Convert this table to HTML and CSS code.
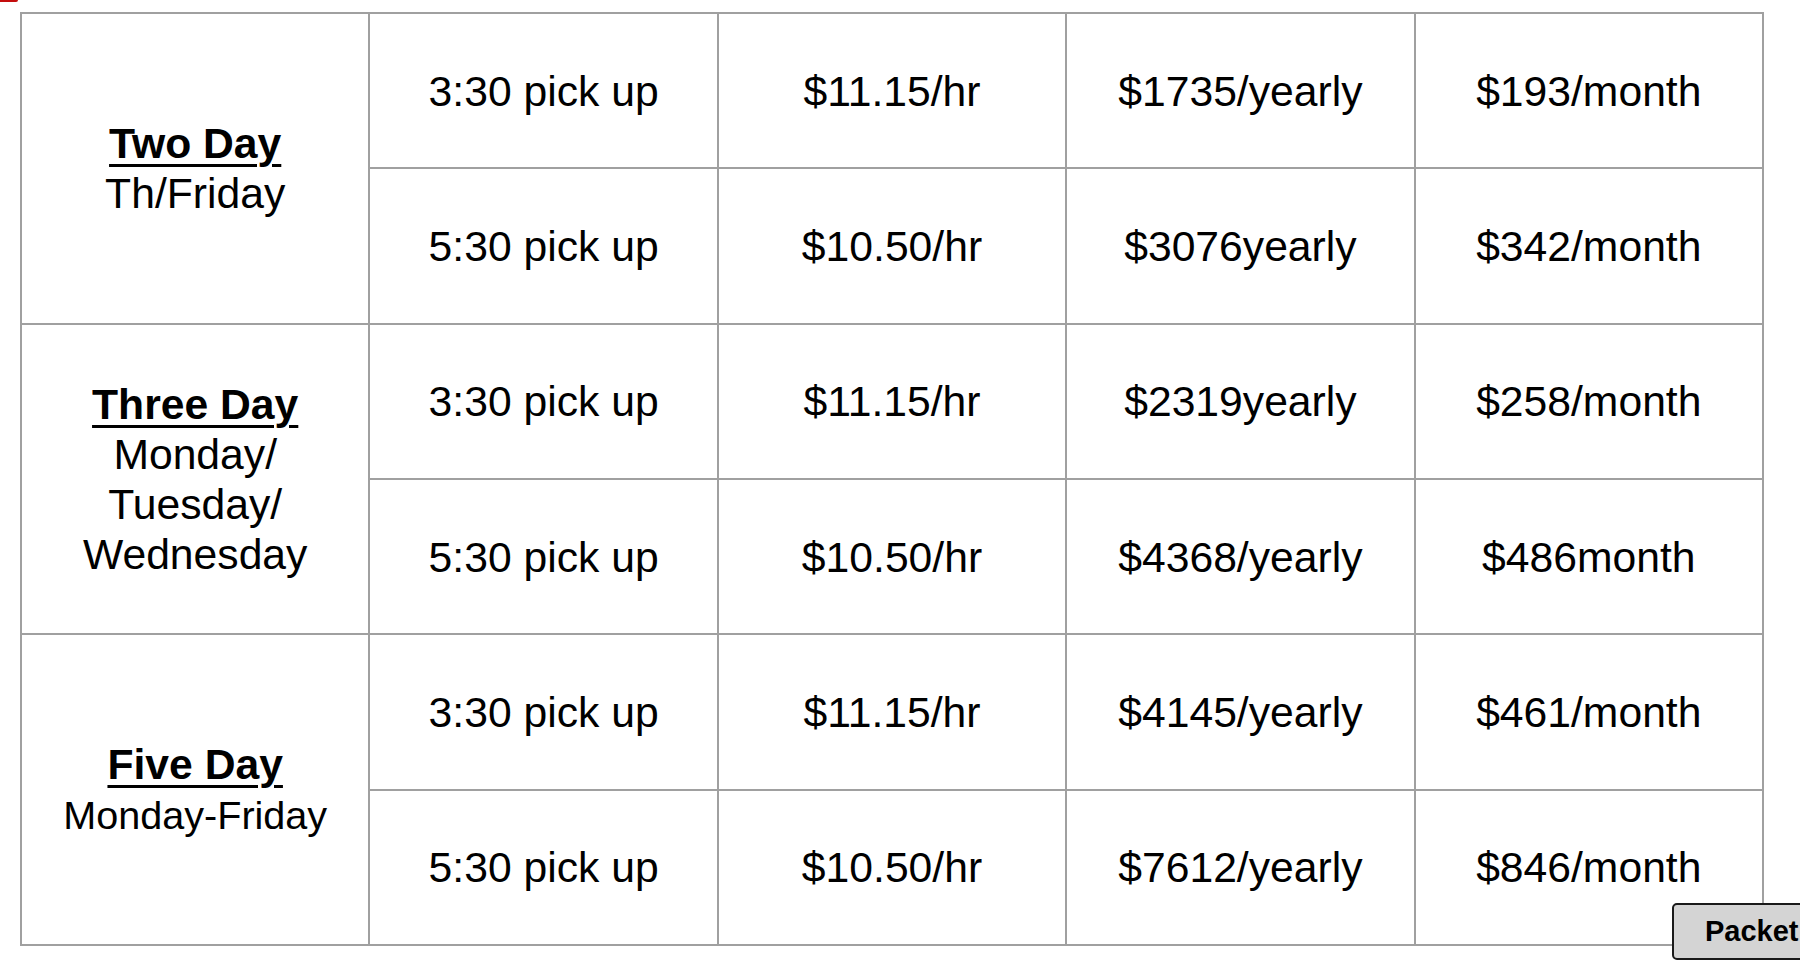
FILE: index.html
```html
<!DOCTYPE html>
<html lang="en">
<head>
<meta charset="utf-8">
<title>Rates</title>
<link rel="stylesheet" href="styles.css">
</head>
<body>
<div class="corner-mark"></div>
<div class="sheet">
  <div class="cell plan span2"><div><span class="plan-name">Two Day</span><br>Th/Friday</div></div>
  <div class="cell">3:30 pick up</div>
  <div class="cell">$11.15/hr</div>
  <div class="cell">$1735/yearly</div>
  <div class="cell">$193/month</div>
  <div class="cell">5:30 pick up</div>
  <div class="cell">$10.50/hr</div>
  <div class="cell">$3076yearly</div>
  <div class="cell">$342/month</div>

  <div class="cell plan span2"><div><span class="plan-name">Three Day</span><br>Monday/<br>Tuesday/<br>Wednesday</div></div>
  <div class="cell">3:30 pick up</div>
  <div class="cell">$11.15/hr</div>
  <div class="cell">$2319yearly</div>
  <div class="cell">$258/month</div>
  <div class="cell">5:30 pick up</div>
  <div class="cell">$10.50/hr</div>
  <div class="cell">$4368/yearly</div>
  <div class="cell">$486month</div>

  <div class="cell plan span2"><div><span class="plan-name">Five Day</span><br><span class="days-small">Monday-Friday</span></div></div>
  <div class="cell">3:30 pick up</div>
  <div class="cell">$11.15/hr</div>
  <div class="cell">$4145/yearly</div>
  <div class="cell">$461/month</div>
  <div class="cell">5:30 pick up</div>
  <div class="cell">$10.50/hr</div>
  <div class="cell">$7612/yearly</div>
  <div class="cell">$846/month</div>
</div>
<button class="packet-btn" type="button">Packet</button>
</body>
</html>
```

FILE: styles.css
```css
html, body {
  margin: 0;
  padding: 0;
  background: #ffffff;
  overflow: hidden;
  width: 1800px;
  height: 966px;
}

body {
  position: relative;
  font-family: "Liberation Sans", Arial, sans-serif;
  color: #000000;
}

.corner-mark {
  position: absolute;
  left: 0;
  top: 0;
  width: 18px;
  height: 2px;
  background: #c40d0d;
  border-bottom-right-radius: 2px;
}

.sheet {
  box-sizing: border-box;
  margin: 12px 0 0 20px;
  width: 1744px;
  height: 934px;
  padding: 2px;
  gap: 2px;
  background: #a0a0a0;
  display: grid;
  grid-template-columns: repeat(5, 1fr);
  grid-template-rows: repeat(6, 1fr);
}

.cell {
  background: #ffffff;
  display: flex;
  align-items: center;
  justify-content: center;
  text-align: center;
  font-size: 42.67px;
  line-height: 50px;
  white-space: nowrap;
}

.span2 {
  grid-row: span 2;
}

.plan-name {
  font-weight: bold;
  text-decoration: underline;
  text-decoration-thickness: 3px;
  text-underline-offset: 6px;
}

.days-small {
  font-size: 39.6px;
}

.packet-btn {
  position: absolute;
  left: 1672px;
  top: 903px;
  width: 200px;
  height: 57px;
  box-sizing: border-box;
  border: 2px solid #1a1a1a;
  border-radius: 5px;
  background: #d4d4d4;
  font-family: "Liberation Sans", Arial, sans-serif;
  font-weight: bold;
  font-size: 29px;
  color: #000000;
  text-align: left;
  padding: 0 0 0 31px;
  margin: 0;
}
```
